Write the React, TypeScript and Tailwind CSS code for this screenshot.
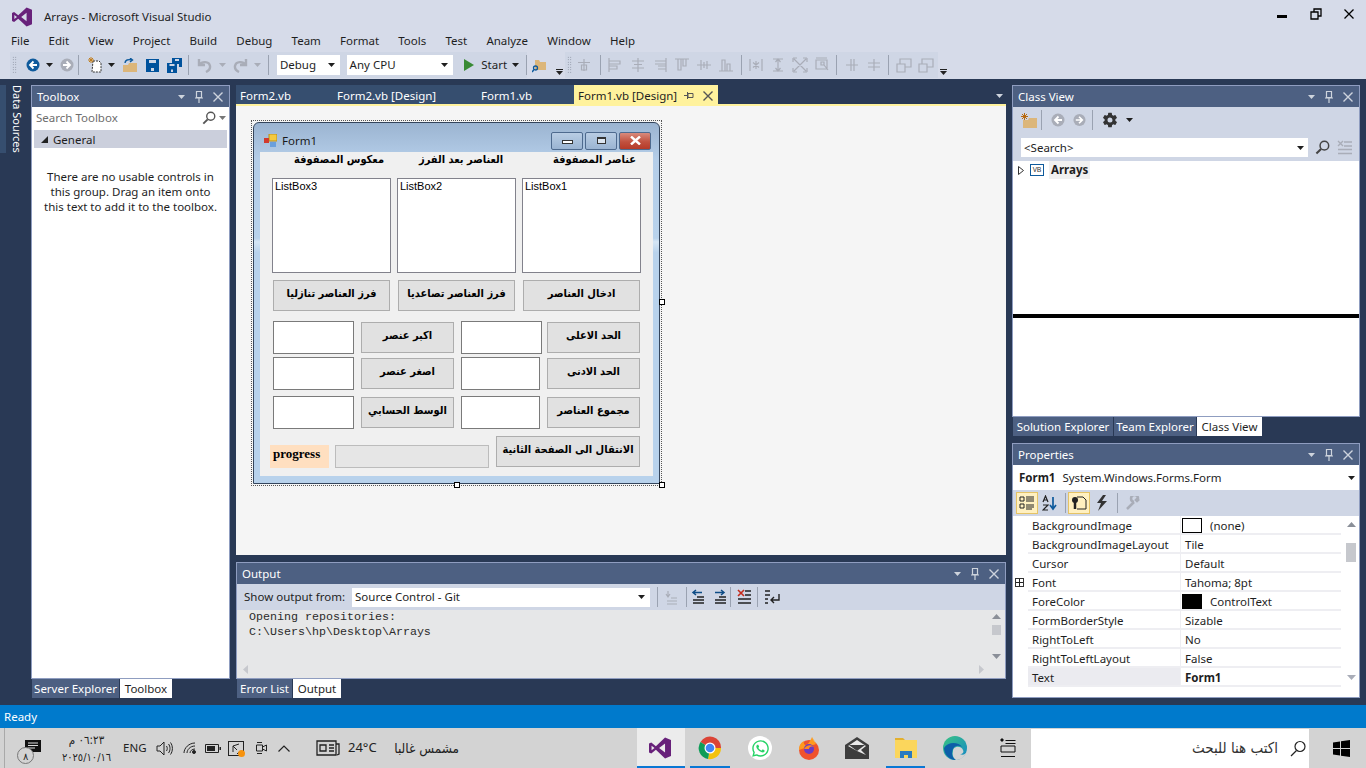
import type { ReactNode } from "react";
import { FaWhatsapp } from "react-icons/fa";
import { IoSettingsSharp } from "react-icons/io5";

const arabic = "font-['DejaVu_Sans_Condensed','DejaVu_Sans',sans-serif]";

function Tri({ className = "fill-[#1e1e1e]" }: { className?: string }) {
  return (
    <svg width="7" height="4" viewBox="0 0 7 4" className={className}>
      <path d="M0 0h7L3.500 4z" />
    </svg>
  );
}

function Cell({ w, children }: { w: string; children?: ReactNode }) {
  return <div className={`flex h-full shrink-0 items-center justify-center ${w}`}>{children}</div>;
}

function Sep({ className = "" }: { className?: string }) {
  return <div className={`h-[20px] w-px shrink-0 bg-[#9aa2b1] ${className}`} />;
}

function Circle({ dir, color }: { dir: "l" | "r"; color: string }) {
  return (
    <svg width="14" height="14" viewBox="0 0 14 14">
      <circle cx="7" cy="7" r="6.500" fill={color} />
      <path d={dir === "l" ? "M7.500 3.500 4 7l3.500 3.500M4.500 7H11" : "M6.500 3.500 10 7l-3.500 3.500M9.500 7H3"} stroke="#fff" strokeWidth="1.800" fill="none" />
    </svg>
  );
}

function Glyph({ d, color = "#a9adb8" }: { d: string; color?: string }) {
  return (
    <svg width="16" height="16" viewBox="0 0 16 16">
      <path d={d} stroke={color} strokeWidth="1.200" fill="none" />
    </svg>
  );
}

function Magnifier({ color = "#555", size = 15 }: { color?: string; size?: number }) {
  return (
    <svg width={size} height={size} viewBox="0 0 16 16">
      <circle cx="10" cy="6" r="4.600" stroke={color} strokeWidth="1.600" fill="none" />
      <path d="M6.500 9.500 1.500 14.500" stroke={color} strokeWidth="2.200" />
    </svg>
  );
}

function FolderIcon() {
  return (
    <svg width="16" height="15" viewBox="0 0 16 15">
      <path d="M2 7h5l1-2h8v10H2z" fill="#dcb67a" />
      <path d="M3.500 0v7M0 3.500h7M1 1l5 5M6 1 1 6" stroke="#b8690f" strokeWidth="1" />
    </svg>
  );
}

function PaneTitle({ title }: { title: string }) {
  return (
    <div className="flex h-[21px] shrink-0 items-center bg-[#4d6082] pl-[5px] text-[11.5px] text-white">
      <span className="flex-1">{title}</span>
      <Tri className="fill-[#ced4dd]" />
      <svg width="10" height="14" viewBox="0 0 10 14" className="ml-[9px]" fill="none" stroke="#ced4dd" strokeWidth="1.200">
        <path d="M2.500 1.500h5v6h-5zM1 8h8M5 8v5" />
      </svg>
      <svg width="10" height="10" viewBox="0 0 10 10" className="mr-[6px] ml-[9px]" stroke="#ced4dd" strokeWidth="1.400">
        <path d="M.5.500l9 9M9.500.500l-9 9" />
      </svg>
    </div>
  );
}

function BottomTab({ label, active, w }: { label: string; active?: boolean; w: string }) {
  return (
    <div className={`flex h-[19px] items-center justify-center text-[11.5px] ${w} ${active ? "bg-white text-[#1e1e1e]" : "bg-[#4d6082] text-white"}`}>
      {label}
    </div>
  );
}

function Overflow({ className = "" }: { className?: string }) {
  return (
    <div className={`flex h-full items-end justify-center pb-[3px] ${className}`}>
      <div className="flex flex-col items-center gap-[1px]">
        <div className="h-px w-[7px] bg-[#222]" />
        <Tri className="fill-[#222]" />
      </div>
    </div>
  );
}

function Grip() {
  return (
    <Cell w="w-[8px]">
      <div className="h-[18px] w-[5px] bg-[radial-gradient(#7d8594_0.6px,transparent_0.8px)] bg-[length:2.5px_2.5px]" />
    </Cell>
  );
}

function MainToolbars() {
  const dis = "#a9adb8";
  return (
    <div className="flex h-[26px] items-center pl-[10px] text-[11.5px] text-[#1e1e1e]">
      <div className="flex h-full w-[543px] items-center bg-[#cfd6e5]">
        <Grip />
        <div className="w-[5px]" />
        <Cell w="w-[20px]"><Circle dir="l" color="#0e5a9c" /></Cell>
        <Cell w="w-[13px]"><Tri /></Cell>
        <Cell w="w-[22px]"><Circle dir="r" color="#a9adb8" /></Cell>
        <Sep className="mr-[6px]" />
        <Cell w="w-[20px]">
          <svg width="16" height="16" viewBox="0 0 16 16">
            <path d="M6 4h6l2 2v9H5z" fill="#fff" stroke="#333" strokeDasharray="2 1" />
            <path d="M4 0v6M1 3h6M2 1l4 4M6 1 2 5" stroke="#c27d1a" />
          </svg>
        </Cell>
        <Cell w="w-[14px]"><Tri /></Cell>
        <Cell w="w-[22px]">
          <svg width="16" height="15" viewBox="0 0 16 15">
            <path d="M1 7h5l1-2h8v9H1z" fill="#dcb67a" />
            <path d="M3 5c0-3 3-4 7-3M8 0l2.500 2L8 4" stroke="#0e5a9c" strokeWidth="1.400" fill="none" />
          </svg>
        </Cell>
        <Cell w="w-[23px]">
          <svg width="13" height="13" viewBox="0 0 13 13">
            <path d="M0 0h13v13H0z" fill="#00529c" />
            <path d="M3 1h7v3H3zM5 9h3v3H5z" fill="#cfd6e5" />
          </svg>
        </Cell>
        <Cell w="w-[21px]">
          <svg width="15" height="15" viewBox="0 0 15 15">
            <path d="M5 0h10v9h-3v-3H5z" fill="#00529c" />
            <path d="M0 5h10v10H0z" fill="#00529c" />
            <path d="M2.500 6h5v2h-5zM4 11.500h2V14H4zM8 1h4v2H8z" fill="#cfd6e5" />
          </svg>
        </Cell>
        <Sep className="mr-[7px] ml-[3px]" />
        <Cell w="w-[18px]">
          <svg width="16" height="15" viewBox="0 0 16 15" fill="none" stroke={dis} strokeWidth="2.400">
            <path d="M2 1v6h6M2 7c3-4 10-4 11 1 .5 3-2 5-4 6" />
          </svg>
        </Cell>
        <Cell w="w-[17px]"><Tri className="fill-[#a9adb8]" /></Cell>
        <Cell w="w-[18px]">
          <svg width="16" height="15" viewBox="0 0 16 15" fill="none" stroke={dis} strokeWidth="2.400">
            <path d="M14 1v6H8M14 7C11 3 4 3 3 8c-.5 3 2 5 4 6" />
          </svg>
        </Cell>
        <Cell w="w-[17px]"><Tri className="fill-[#a9adb8]" /></Cell>
        <Sep className="mr-[8px] ml-[2px]" />
        <div className="flex h-[20px] w-[64px] items-center justify-between bg-white pr-[5px] pl-[3px]">
          Debug <Tri />
        </div>
        <div className="ml-[7px] flex h-[20px] w-[109px] items-center justify-between bg-white pr-[5px] pl-[3px]">
          Any CPU <Tri />
        </div>
        <Cell w="ml-[8px] w-[16px]">
          <svg width="10" height="12" viewBox="0 0 10 12"><path d="M0 0l10 6-10 6z" fill="#388a34" /></svg>
        </Cell>
        <span className="ml-[4px] w-[28px]">Start</span>
        <Cell w="w-[14px]"><Tri /></Cell>
        <Sep className="ml-[3px]" />
        <div className="flex h-full w-[27px] items-center justify-center bg-[#d6dbe9]">
          <svg width="15" height="15" viewBox="0 0 15 15">
            <path d="M3 2h4l1 2h6v8H3z" fill="#dcb67a" />
            <circle cx="3.500" cy="10" r="2" fill="none" stroke="#0e5a9c" strokeWidth="1.300" />
            <path d="M2 11.500 0 14" stroke="#0e5a9c" strokeWidth="1.500" />
          </svg>
        </div>
      </div>
      <Overflow className="w-[12px]" />
      <div className="flex h-full w-[373px] items-center bg-[#cfd6e5]">
        <Grip />
        <Cell w="w-[22px]"><Glyph d="M2 5.500h12M8 2v12M5.500 8h5v5h-5z" /></Cell>
        <Sep className="mr-[3px] ml-[5px]" />
        <Cell w="w-[22px]"><Glyph d="M2 1v14M2 4h11v3H2M2 9h8v3H2" /></Cell>
        <Cell w="w-[23px]"><Glyph d="M8 1v14M2 4h12M4 7.500h8M2 11h12" /></Cell>
        <Cell w="w-[22px]"><Glyph d="M14 1v14M3 4h11v3H3M6 9h8v3H6" /></Cell>
        <Cell w="w-[22px]"><Glyph d="M1 2h14M4 2h3v11H4zM9 2h3v7H9z" /></Cell>
        <Cell w="w-[22px]"><Glyph d="M1 8h14M5 3v10M11 4v8M8 5v6" /></Cell>
        <Cell w="w-[22px]"><Glyph d="M1 14h14M4 3h3v11H4zM9 7h3v7H9z" /></Cell>
        <Sep className="mr-[2px] ml-[4px]" />
        <Cell w="w-[23px]"><Glyph d="M2 2v12M14 2v12M8 4v8M5 5.500l6 5M11 5.500l-6 5" /></Cell>
        <Cell w="w-[22px]"><Glyph d="M3 2h10M3 14h10M8 2v12M5.500 5 8 2l2.500 3M5.500 11 8 14l2.500-3" /></Cell>
        <Cell w="w-[22px]"><Glyph d="M1 1h4M1 1v4M15 1h-4M15 1v4M1 15h4M1 15v-4M15 15h-4M15 15v-4M2 2l12 12M14 2 2 14" /></Cell>
        <Cell w="w-[22px]"><Glyph d="M2 3h11v9H2zM2 1h11M7 5h3v3H7zM10 8l4 5" /></Cell>
        <Sep className="mr-[4px] ml-[3px]" />
        <Cell w="w-[22px]"><Glyph d="M7 2v12M10 2v12M2 8h12" /></Cell>
        <Cell w="w-[22px]"><Glyph d="M2 6h12M2 10h12M8 2v12" /></Cell>
        <Sep className="mr-[4px] ml-[3px]" />
        <Cell w="w-[22px]"><Glyph d="M1 7h8v8H1zM4 7V2h11v8h-6" /></Cell>
        <Cell w="w-[22px]"><Glyph d="M1 7h8v8H1zM4 7V2h11v8h-6" /></Cell>
      </div>
      <Overflow className="w-[10px] bg-[#d6dbe9]" />
    </div>
  );
}

function Toolbox() {
  return (
    <div className="flex w-[199px] flex-col">
      <div className="flex flex-1 flex-col border border-[#8f9dc0] bg-white">
        <PaneTitle title="Toolbox" />
        <div className="flex h-[20px] items-center justify-between bg-white pt-px pr-[3px] pl-[4px] text-[11.5px] text-[#6d6d6d]">
          <span>Search Toolbox</span>
          <span className="flex items-center gap-[3px]"><Magnifier color="#555" size={14} /><Tri className="fill-[#777]" /></span>
        </div>
        <div className="mx-[2px] mt-[3px] flex h-[18px] items-center bg-[#cbcfdc] pt-px pl-[6px] text-[11.5px] text-[#1e1e1e]">
          <svg width="7" height="7" viewBox="0 0 7 7" className="mr-[5px] ml-[1px]"><path d="M7 0v7H0z" fill="#222" /></svg>
          General
        </div>
        <p className="mt-[21px] px-[10px] text-center text-[11.5px] leading-[15px] text-[#1e1e1e]">
          There are no usable controls in this group. Drag an item onto this text to add it to the toolbox.
        </p>
      </div>
      <div className="flex gap-px pl-px">
        <BottomTab label="Server Explorer" w="w-[87px]" />
        <BottomTab label="Toolbox" active w="w-[52px]" />
      </div>
    </div>
  );
}

function FormBtn({ label, w }: { label: string; w: string }) {
  return (
    <div className={`flex h-[31px] shrink-0 items-center justify-center border border-[#adadad] bg-[#e1e1e1] pb-[2px] text-[11px] font-bold whitespace-nowrap text-black ${arabic} ${w}`} dir="rtl">
      {label}
    </div>
  );
}

function TextBox({ w }: { w: string }) {
  return <div className={`h-[33px] shrink-0 border border-[#7a7a7a] bg-white ${w}`} />;
}

function ListBox({ name }: { name: string }) {
  return (
    <div className="h-[95px] w-[119px] border border-[#82828c] bg-white pl-[2px] font-['Liberation_Sans',sans-serif] text-[11px] leading-[15px] text-black">
      {name}
    </div>
  );
}

function Handle() {
  return <div className="h-[6px] w-[6px] border border-black bg-white" />;
}

function CaptionBtn({ children, className }: { children: ReactNode; className: string }) {
  return <div className={`flex h-[18px] w-[32px] items-center justify-center rounded-[2px] border border-[#4e6a8e] ${className}`}>{children}</div>;
}

function DesignedForm() {
  return (
    <div className="relative w-[411px] border border-dotted border-[#555] p-px">
      <div className="flex h-[362px] w-[407px] flex-col rounded-t-[6px] border border-[#34455c] bg-[linear-gradient(#9bb4d1_0,#b4cde8_10%,#b8d2ec_32%,#d6e6f5_33%,#b8d2ec_36%,#b8d2ec_100%)]">
        <div className="flex h-[29px] shrink-0 items-center pt-[6px] pl-[10px] text-[11.5px] text-[#1a1a1a]">
          <svg width="13" height="13" viewBox="0 0 13 13">
            <path d="M5 0h8v7H5z" fill="#f4c93e" stroke="#b98f1c" />
            <path d="M0 4h5v5H0z" fill="#d13a2e" />
            <path d="M6 8h6v5H6z" fill="#6a9fdc" />
          </svg>
          <span className="ml-[5px] flex-1">Form1</span>
          <div className="mr-[8px] flex gap-[2px]">
            <CaptionBtn className="bg-[linear-gradient(#b9cde4,#9ab4d2)]"><div className="mt-[2px] h-[4px] w-[11px] border border-[#333] bg-white" /></CaptionBtn>
            <CaptionBtn className="bg-[linear-gradient(#b9cde4,#9ab4d2)]"><div className="h-[7px] w-[9px] border border-t-2 border-[#333] bg-white/60" /></CaptionBtn>
            <CaptionBtn className="bg-[linear-gradient(#d98a7c,#c1513f_55%,#b53a28)]">
              <svg width="11" height="9" viewBox="0 0 11 9" stroke="#fff" strokeWidth="2.400"><path d="M1 .5l9 8M10 .5l-9 8" /></svg>
            </CaptionBtn>
          </div>
        </div>
        <div className="mx-[6px] flex h-[324px] flex-col bg-[#f0f0f0]">
          <div className={`flex h-[26px] shrink-0 items-start text-[11px] leading-[15px] font-bold whitespace-nowrap text-black ${arabic}`} dir="ltr">
            <span className="ml-[34px] w-[87px] text-center">معكوس المصفوفة</span>
            <span className="ml-[38px] w-[81px] text-center">العناصر بعد الفرز</span>
            <span className="ml-[53px] w-[79px] text-center">عناصر المصفوفة</span>
          </div>
          <div className="ml-[12px] flex gap-[6px]">
            <ListBox name="ListBox3" />
            <ListBox name="ListBox2" />
            <ListBox name="ListBox1" />
          </div>
          <div className="mt-[7px] ml-[13px] flex gap-[8px]">
            <FormBtn label="فرز العناصر تنازليا" w="w-[117px]" />
            <FormBtn label="فرز العناصر تصاعديا" w="w-[117px]" />
            <FormBtn label="ادخال العناصر" w="w-[117px]" />
          </div>
          <div className="mt-[10px] ml-[13px] flex items-center">
            <TextBox w="w-[81px]" />
            <FormBtn label="اكبر عنصر" w="ml-[7px] w-[93px]" />
            <TextBox w="ml-[7px] w-[81px]" />
            <FormBtn label="الحد الاعلى" w="ml-[5px] w-[93px]" />
          </div>
          <div className="mt-[3px] ml-[13px] flex items-center">
            <TextBox w="w-[81px]" />
            <FormBtn label="اصغر عنصر" w="ml-[7px] w-[93px]" />
            <TextBox w="ml-[7px] w-[79px]" />
            <FormBtn label="الحد الادنى" w="ml-[7px] w-[93px]" />
          </div>
          <div className="mt-[6px] ml-[13px] flex items-center">
            <TextBox w="w-[81px]" />
            <FormBtn label="الوسط الحسابي" w="ml-[7px] w-[93px]" />
            <TextBox w="ml-[7px] w-[79px]" />
            <FormBtn label="مجموع العناصر" w="ml-[7px] w-[93px]" />
          </div>
          <div className="mt-[7px] ml-[10px] flex h-[32px]">
            <div className="mt-[9px] h-[23px] w-[59px] bg-[#ffdfc0] pl-[3px] font-['Liberation_Serif',serif] text-[13px] leading-[17px] font-bold text-black">progress</div>
            <div className="mt-[9px] ml-[6px] h-[23px] w-[154px] border border-[#bcbcbc] bg-[#e6e6e6]" />
            <FormBtn label="الانتقال الى الصفحة الثانية" w="ml-[7px] w-[144px]" />
          </div>
        </div>
      </div>
      <div className="absolute top-[178px] left-[407px]"><Handle /></div>
      <div className="absolute top-[361px] left-[202px]"><Handle /></div>
      <div className="absolute top-[361px] left-[407px]"><Handle /></div>
    </div>
  );
}

function ArrowLines({ dir }: { dir: "l" | "r" }) {
  return (
    <svg width="16" height="16" viewBox="0 0 16 16" fill="none">
      <path d={dir === "l" ? "M3 3.500h9M6 1 3 3.500 6 6" : "M3 3.500h9M9 1l3 2.500L9 6"} stroke="#0e4c86" strokeWidth="1.500" />
      <path d="M7 8h7M3 11h11M3 14h11" stroke="#222" strokeWidth="1.300" />
    </svg>
  );
}

function Center() {
  return (
    <div className="flex w-[770px] flex-col">
      <div className="flex h-[19px] items-center text-[11.5px] text-white">
        <div className="flex h-full w-[338px] items-center bg-[#364e6f] pt-[3px] pl-[4px]">
          <span className="w-[97px]">Form2.vb</span>
          <span className="w-[144px]">Form2.vb [Design]</span>
          <span>Form1.vb</span>
        </div>
        <div className="flex h-full w-[144px] items-center bg-[#fff29d] pt-[3px] pl-[4px] text-[#1e1e1e]">
          <span className="flex-1">Form1.vb [Design]</span>
          <svg width="10" height="8" viewBox="0 0 10 8" fill="none" stroke="#555"><path d="M4 1.500h5v4H4zM3.500 0v7M0 3.500h3" /></svg>
          <svg width="10" height="10" viewBox="0 0 10 10" className="mr-[5px] ml-[9px]" stroke="#555" strokeWidth="1.400"><path d="M.5.500l9 9M9.500.500l-9 9" /></svg>
        </div>
        <div className="flex flex-1 justify-end pt-[3px] pr-[3px]"><Tri className="fill-[#ced4dd]" /></div>
      </div>
      <div className="h-[451px] border-t-2 border-[#fff29d] bg-[#f5f5f5] pt-[14px] pl-[15px]">
        <DesignedForm />
      </div>
      <div className="mt-[7px] flex flex-1 flex-col border border-[#8f9dc0]">
        <PaneTitle title="Output" />
        <div className="flex h-[26px] shrink-0 items-center bg-[#cfd6e5] pl-[7px] text-[11.5px] text-[#1e1e1e]">
          <span className="w-[108px]">Show output from:</span>
          <div className="flex h-[19px] w-[298px] items-center justify-between bg-white pr-[5px] pl-[3px]">Source Control - Git <Tri /></div>
          <Sep className="ml-[7px]" />
          <Cell w="w-[28px]"><Glyph d="M4 2v6M2 5l2 3 2-3M7 9h6M3 12h10M3 15h10" /></Cell>
          <Sep />
          <Cell w="w-[22px]"><ArrowLines dir="l" /></Cell>
          <Cell w="w-[21px]"><ArrowLines dir="r" /></Cell>
          <Sep />
          <Cell w="w-[26px]">
            <svg width="16" height="16" viewBox="0 0 16 16">
              <path d="M2 1l6 6M8 1 2 7" stroke="#c42b1c" strokeWidth="1.600" />
              <path d="M9 2h6M9 6h6M2 10h13M2 14h13" stroke="#222" strokeWidth="1.600" />
            </svg>
          </Cell>
          <Sep />
          <Cell w="w-[28px]">
            <svg width="16" height="14" viewBox="0 0 16 14" fill="none" stroke="#222">
              <path d="M1 1h5M1 5h5M1 9h3M1 13h3M15 4v6H7M10 7 7 10l3 3" strokeWidth="1.400" />
            </svg>
          </Cell>
        </div>
        <div className="relative flex-1 bg-[#e6e7e8] pl-[12px] font-['Liberation_Mono',monospace] text-[11.67px] leading-[15px] text-[#2b2b2b]">
          <div>Opening repositories:</div>
          <div>C:\Users\hp\Desktop\Arrays</div>
          <div className="absolute top-[4px] right-[4px] flex h-[45px] w-[9px] flex-col items-center justify-between">
            <svg width="9" height="5" viewBox="0 0 9 5"><path d="M4.500 0 9 5H0z" fill="#8a8f98" /></svg>
            <div className="h-[10px] w-[9px] bg-[#c6c8cd]" />
            <div className="h-[8px]" />
            <svg width="9" height="5" viewBox="0 0 9 5"><path d="M4.500 5 9 0H0z" fill="#8a8f98" /></svg>
          </div>
          <div className="absolute right-[21px] bottom-[4px] left-[6px] flex justify-between">
            <svg width="5" height="9" viewBox="0 0 5 9"><path d="M0 4.500 5 0v9z" fill="#c6c8cd" /></svg>
            <svg width="5" height="9" viewBox="0 0 5 9"><path d="M5 4.500 0 0v9z" fill="#c6c8cd" /></svg>
          </div>
        </div>
      </div>
      <div className="flex gap-px pl-px">
        <BottomTab label="Error List" w="w-[55px]" />
        <BottomTab label="Output" active w="w-[48px]" />
      </div>
    </div>
  );
}

function ClassView() {
  return (
    <div className="flex h-[332px] flex-col border border-[#8f9dc0] bg-white">
      <PaneTitle title="Class View" />
      <div className="flex h-[26px] shrink-0 items-center bg-[#cfd6e5] pl-[6px]">
        <Cell w="w-[20px]"><FolderIcon /></Cell>
        <Sep className="ml-[2px]" />
        <Cell w="w-[31px]"><Circle dir="l" color="#a9adb8" /></Cell>
        <Cell w="w-[13px]"><Circle dir="r" color="#a9adb8" /></Cell>
        <Sep className="ml-[6px]" />
        <Cell w="w-[33px]"><IoSettingsSharp size={16} color="#333" /></Cell>
        <Tri />
      </div>
      <div className="flex h-[28px] shrink-0 items-start bg-[#cfd6e5] pt-[5px] pl-[8px] text-[11.5px] text-[#1e1e1e]">
        <div className="flex h-[19px] w-[287px] items-center justify-between bg-white pr-[4px] pl-[3px]">&lt;Search&gt; <Tri /></div>
        <div className="mt-[2px] ml-[7px]"><Magnifier color="#444" /></div>
        <div className="mt-[2px] ml-[7px]">
          <svg width="16" height="15" viewBox="0 0 16 15" stroke="#a9adb8" strokeWidth="1.400">
            <path d="M1 1l5 5M6 1 1 6M7 2h8M7 6h8M1 9.500h14M1 13.500h14" />
          </svg>
        </div>
      </div>
      <div className="flex h-[18px] shrink-0 items-center pl-[5px] text-[11.5px] font-bold text-[#1e1e1e]">
        <svg width="6" height="9" viewBox="0 0 6 9" fill="none" stroke="#333"><path d="M.5.500l5 4-5 4z" /></svg>
        <div className="ml-[6px] flex h-[12px] w-[14px] items-center justify-center border border-[#0e5a9c] text-[7px] font-normal text-[#333]">VB</div>
        <div className="ml-[5px] bg-[#f0f0f0] px-[2px]">Arrays</div>
      </div>
      <div className="mt-[135px] h-[4px] shrink-0 bg-black" />
    </div>
  );
}

const props: [string, string, "white" | "black" | null][] = [
  ["BackgroundImage", "(none)", "white"],
  ["BackgroundImageLayout", "Tile", null],
  ["Cursor", "Default", null],
  ["Font", "Tahoma; 8pt", null],
  ["ForeColor", "ControlText", "black"],
  ["FormBorderStyle", "Sizable", null],
  ["RightToLeft", "No", null],
  ["RightToLeftLayout", "False", null],
  ["Text", "Form1", null],
];

function Properties() {
  return (
    <div className="flex flex-1 flex-col border border-[#8f9dc0] bg-white text-[11.5px] text-[#1e1e1e]">
      <PaneTitle title="Properties" />
      <div className="flex h-[25px] shrink-0 items-center pr-[4px] pl-[6px]">
        <b className="font-bold">Form1</b>
        <span className="ml-[7px] flex-1">System.Windows.Forms.Form</span>
        <Tri />
      </div>
      <div className="flex h-[26px] shrink-0 items-center bg-[#cfd6e5] pl-[3px]">
        <div className="flex h-[22px] w-[22px] items-center justify-center border border-[#e5c365] bg-[#fff0c0]">
          <svg width="16" height="14" viewBox="0 0 16 14"><path d="M1 1h4v4H1zM1 8h4v4H1zM7 1h8M7 3h8M7 5h8M7 9h8M7 11h8M7 13h6" stroke="#222" fill="none" /></svg>
        </div>
        <Cell w="w-[24px]">
          <svg width="16" height="16" viewBox="0 0 16 16"><path d="M1 7l2.500-6L6 7M2 5h3M1 10h5l-5 5h5" stroke="#222" strokeWidth="1.200" fill="none" /><path d="M11 2v12M8 10l3 4 3-4" stroke="#0e5a9c" strokeWidth="1.700" fill="none" /></svg>
        </Cell>
        <Sep className="mr-[2px] ml-[3px]" />
        <div className="flex h-[22px] w-[22px] items-center justify-center border border-[#e5c365] bg-[#fff0c0]">
          <svg width="16" height="16" viewBox="0 0 16 16"><path d="M6 2h6l3 3v9H6" stroke="#222" fill="none" /><path d="M4 3v11" stroke="#222" strokeWidth="2.500" /><circle cx="4" cy="5" r="3" fill="#222" /></svg>
        </div>
        <Cell w="w-[24px]">
          <svg width="12" height="16" viewBox="0 0 12 16"><path d="M7 0 1 8h4l-3 8 9-10H6l4-6z" fill="#333" /></svg>
        </Cell>
        <Sep className="ml-[3px]" />
        <Cell w="w-[30px]">
          <svg width="14" height="14" viewBox="0 0 14 14"><path d="M1 13l7-7M8 6a3.500 3.500 0 1 1 4-4L10 4l1 1 2-2" stroke="#a9adb8" strokeWidth="2.500" fill="none" /></svg>
        </Cell>
      </div>
      <div className="flex shrink-0">
        <div className="w-[15px] shrink-0 pt-[62px]">
          <div className="ml-[2px] flex h-[9px] w-[9px] items-center justify-center border border-[#333]">
            <svg width="7" height="7" viewBox="0 0 7 7" stroke="#222"><path d="M3.500 0v7M0 3.500h7" /></svg>
          </div>
        </div>
        <div className="w-[313px] shrink-0">
          {props.map(([name, value, swatch]) => (
            <div key={name} className="flex h-[19px] border-b-2 border-[#eeeef2] leading-[19px]">
              <div className={`w-[152px] pl-[4px] ${name === "Text" ? "bg-[#ebebf0]" : ""}`}>{name}</div>
              <div className="flex flex-1 items-center border-l border-[#eeeef2] pt-px pl-[4px]">
                {swatch === "white" && <div className="mr-[8px] -ml-[3px] h-[15px] w-[20px] border border-black bg-white" />}
                {swatch === "black" && <div className="mr-[8px] -ml-[3px] h-[15px] w-[20px] bg-black" />}
                <span className={name === "Text" ? "font-bold" : ""}>{value}</span>
              </div>
            </div>
          ))}
        </div>
        <div className="flex flex-1 flex-col items-center pt-[6px] pl-[2px]">
          <svg width="9" height="5" viewBox="0 0 9 5"><path d="M4.500 0 9 5H0z" fill="#8a8f98" /></svg>
          <div className="mt-[16px] h-[19px] w-[10px] bg-[#c6c8cd]" />
          <div className="flex-1" />
          <svg width="9" height="5" viewBox="0 0 9 5" className="mb-[7px]"><path d="M4.500 5 9 0H0z" fill="#a9adb8" /></svg>
        </div>
      </div>
    </div>
  );
}

function TaskIcon({ w, children, active, bar, className = "" }: { w: string; children: ReactNode; active?: boolean; bar?: string; className?: string }) {
  return (
    <div className={`relative flex h-[40px] shrink-0 items-center justify-center ${w} ${active ? "bg-[#ececec]" : ""} ${className}`}>
      {children}
      {bar && <div className={`absolute bottom-0 h-[2px] ${bar}`} />}
    </div>
  );
}

function Taskbar() {
  return (
    <div className="flex h-[40px] items-center bg-[#d3d3d3] text-[12px] text-[#222]">
      <div className="flex h-[40px] w-[637px] shrink-0 items-center">
        <div className="ml-[4px] h-[40px] w-px bg-[#a9a9a9]" />
        <div className="relative ml-[20px] h-[40px] w-[24px]">
          <svg width="17" height="15" viewBox="0 0 17 15" className="absolute top-[12px] left-0">
            <path d="M0 0h16v12H8l-3 3v-3H0z" fill="#111" />
            <path d="M3 3h10M3 5.500h10M3 8h7" stroke="#ddd" />
          </svg>
          <div className="absolute top-[19px] left-[-8px] flex h-[17px] w-[17px] items-center justify-center rounded-full border border-[#777] bg-[#d3d3d3] text-[10px] leading-none">٨</div>
        </div>
        <div className={`ml-[13px] flex w-[49px] flex-col items-center pt-px text-[11.5px] leading-[18px] ${arabic}`} dir="rtl">
          <span>٠٦:٢٣ م</span>
          <span className="text-[11px]">٢٠٢٥/١٠/١٦</span>
        </div>
        <span className="ml-[12px] w-[33px] text-[11.5px]">ENG</span>
        <svg width="17" height="15" viewBox="0 0 17 15" className="shrink-0" fill="none" stroke="#222">
          <path d="M1 5h3l4-4v13l-4-4H1zM10.500 5c1 1.500 1 3.500 0 5M12.500 3c2 2.500 2 6.500 0 9M14.500 1.500c2.500 3.500 2.500 8.500 0 12" />
        </svg>
        <svg width="14" height="12" viewBox="0 0 14 12" className="ml-[10px] shrink-0" fill="none" stroke="#222">
          <path d="M1 11C1 6 6 1 12 1M4 11c0-3 3-7 8-7M7 11c0-2 2-4 5-4" />
          <circle cx="11" cy="10" r="1.500" fill="#222" />
        </svg>
        <svg width="16" height="9" viewBox="0 0 16 9" className="ml-[8px] shrink-0">
          <path d="M.5.500h13v8H.5z" fill="none" stroke="#222" />
          <path d="M2 2h8v5H2zM14.500 3H16v3h-1.500z" fill="#222" />
        </svg>
        <div className="relative ml-[7px] h-[15px] w-[16px] shrink-0 border border-[#222]">
          <svg width="14" height="13" viewBox="0 0 14 13" fill="none" stroke="#222"><path d="M4 10V4l6-2M4 4l4 4M8 12l3-3" /></svg>
          <div className="absolute top-[8px] left-[9px] h-[7px] w-[7px] rounded-full bg-[#f7930e]" />
        </div>
        <svg width="12" height="16" viewBox="0 0 12 16" className="ml-[11px] shrink-0" fill="none" stroke="#222">
          <path d="M1.500 5h6v6h-6zM7.500 7l4-2v6l-4-2M2 2.500h5M2 13.500h5" />
        </svg>
        <svg width="12" height="7" viewBox="0 0 12 7" className="ml-[11px] shrink-0" fill="none" stroke="#222" strokeWidth="1.200"><path d="M.5 6.500 6 1l5.500 5.500" /></svg>
        <svg width="24" height="16" viewBox="0 0 24 16" className="ml-[26px] shrink-0" fill="none" stroke="#222" strokeWidth="1.300">
          <path d="M1 1h19v14H1zM20 4h3v10l-2 1M4 5h6v6H4zM13 5h5M13 8h5M13 11h5" />
        </svg>
        <span className="ml-[8px] w-[29px] text-[13px] whitespace-nowrap">24°C</span>
        <span className={`ml-[10px] w-[72px] text-[13.5px] whitespace-nowrap ${arabic}`} dir="rtl">مشمس غالبا</span>
      </div>
      <TaskIcon w="w-[48px]" active bar="right-0 left-0 bg-[#0a78d4]">
        <svg width="22" height="22" viewBox="0 0 24 24" className="mr-[2px]">
          <path fillRule="evenodd" d="M17.500.500 7.500 10l-5-4L0 7.200v9.600L2.500 18l5-4 10 9.500 6.500-2.700V3.200zm0 6.500v10L11 12zM2.800 9.500 6 12l-3.200 2.500z" fill="#68217a" />
        </svg>
      </TaskIcon>
      <TaskIcon w="w-[50px]" bar="right-[5px] left-[5px] bg-[#0a78d4]">
        <svg width="24" height="24" viewBox="0 0 24 24">
          <path d="M12 12 2.500 6A11 11 0 0 1 23 12z" fill="#db4437" />
          <path d="M12 12 23 12A11 11 0 0 1 10 23z" fill="#f4c20d" />
          <path d="M12 12l-2 11A11 11 0 0 1 2.500 6z" fill="#0f9d58" />
          <circle cx="12" cy="12" r="5.500" fill="#fff" />
          <circle cx="12" cy="12" r="4.300" fill="#4285f4" />
        </svg>
      </TaskIcon>
      <TaskIcon w="w-[50px]">
        <div className="flex h-[24px] w-[24px] items-center justify-center rounded-full bg-white">
          <FaWhatsapp size={19} color="#25d366" />
        </div>
      </TaskIcon>
      <TaskIcon w="w-[47px]">
        <svg width="22" height="24" viewBox="0 0 22 24">
          <circle cx="11" cy="14" r="10" fill="#f0522d" />
          <path d="M14 1c1 4 6 6 7 13 0 1 0-4-3-7z" fill="#ffb12a" />
          <path d="M1 14C1 8 4 6 6 5c-1 3 1 4 2 4s4-3 6-8c1 3 3 5 4 7z" fill="#ff9a1f" />
          <circle cx="11" cy="13" r="5" fill="#6b3bc4" />
          <path d="M6 13c2-4 7-5 10-2-3-1-5 0-5 2z" fill="#ff8a1f" />
        </svg>
      </TaskIcon>
      <TaskIcon w="w-[49px]">
        <svg width="24" height="22" viewBox="0 0 24 22">
          <path d="M0 8 12 0l12 8v14H0z" fill="#3d3d3d" />
          <path d="M3 9l9-6 9 6-5 4 5 5-9-4z" fill="#e8e8e8" />
          <path d="M4 8h16L12 14z" fill="#3d3d3d" />
        </svg>
      </TaskIcon>
      <TaskIcon w="w-[49px]" bar="right-[5px] left-[5px] bg-[#0a78d4]">
        <svg width="24" height="24" viewBox="0 0 24 24">
          <path d="M1 2h8l2 2h-10z" fill="#e3b02e" />
          <path d="M1 4h22v18H1z" fill="#fbd65c" />
          <path d="M6 22v-7h12v7h-4v-3h-4v3z" fill="#2a7ac0" />
        </svg>
      </TaskIcon>
      <TaskIcon w="w-[49px]">
        <svg width="24" height="24" viewBox="0 0 24 24">
          <defs>
            <linearGradient id="edgeA" x1="0" y1="0" x2="1" y2="1">
              <stop offset="0" stopColor="#39c481" />
              <stop offset="1" stopColor="#1487c9" />
            </linearGradient>
          </defs>
          <circle cx="12" cy="12" r="12" fill="url(#edgeA)" />
          <path d="M1 12C1 18 6 24 13 24c-4-2-5-7-3-11s6-4 9-2C16 6 5 5 1 12z" fill="#0d5ea8" />
          <path d="M10 15c0-5 8-6 10-1 1 2 0 4-3 4 3 2 6 0 7-3-1 4-5 9-11 9-3-2-4-5-3-9z" fill="#d3d3d3" />
        </svg>
      </TaskIcon>
      <TaskIcon w="w-[52px]" className="pl-[6px]">
        <svg width="16" height="20" viewBox="0 0 16 20" fill="none" stroke="#111">
          <path d="M1 1h2v2H1z" fill="#111" />
          <path d="M5.500 2.500h10M1 8h14v6H1zM1 18.500h14M5.500 5.500h10" />
        </svg>
      </TaskIcon>
      <div className={`flex h-[39px] w-[278px] shrink-0 items-center justify-end bg-white pr-[3px] text-[#333] ${arabic}`}>
        <span dir="rtl" className="mr-[12px] text-[15px] whitespace-nowrap">اكتب هنا للبحث</span>
        <svg width="16" height="17" viewBox="0 0 16 17" fill="none" stroke="#222" strokeWidth="1.200">
          <circle cx="10" cy="6.500" r="5" />
          <path d="M6.500 10.500 1 16" />
        </svg>
      </div>
      <div className="flex flex-1 items-center justify-center pl-[8px]">
        <svg width="17" height="17" viewBox="0 0 17 17" fill="#000">
          <path d="M0 2.500 7 1.500v6.500H0zM8 1.300 17 0v8H8zM0 9h7v6.500l-7-1zM8 9h9v8l-9-1.300z" />
        </svg>
      </div>
    </div>
  );
}

export default function App() {
  const menus = ["File", "Edit", "View", "Project", "Build", "Debug", "Team", "Format", "Tools", "Test", "Analyze", "Window", "Help"];
  return (
    <div className="flex h-[768px] w-[1366px] flex-col overflow-hidden bg-[#293955] font-['Noto_Sans',sans-serif]">
      <div className="h-[79px] shrink-0 bg-[#d6dbe9]">
        <div className="flex h-[32px] items-center pl-[12px] text-[11.5px] text-[#1e1e1e]">
          <svg width="20" height="20" viewBox="0 0 24 24" className="mt-[2px]">
            <path fillRule="evenodd" d="M17.500.500 7.500 10l-5-4L0 7.200v9.600L2.500 18l5-4 10 9.500 6.500-2.700V3.200zm0 6.500v10L11 12zM2.800 9.500 6 12l-3.200 2.500z" fill="#68217a" />
          </svg>
          <span className="mt-[2px] ml-[12px] flex-1">Arrays - Microsoft Visual Studio</span>
          <div className="mb-[4px] flex w-[89px] items-center">
            <div className="mt-[4px] h-[3px] w-[10px] bg-black" />
            <svg width="12" height="12" viewBox="0 0 12 12" className="ml-[23px]" fill="none" stroke="#000" strokeWidth="1.300">
              <path d="M1 4h7v7H1zM4 4V1h7v7H8" />
            </svg>
            <svg width="10" height="10" viewBox="0 0 10 10" className="ml-[22px]" stroke="#000" strokeWidth="1.300"><path d="M.5.500l9 9M9.500.500l-9 9" /></svg>
          </div>
        </div>
        <div className="flex h-[20px] items-center gap-[19.2px] pb-[2px] pl-[11px] text-[11.5px] text-[#1e1e1e]">
          {menus.map((m) => (
            <span key={m}>{m}</span>
          ))}
        </div>
        <MainToolbars />
      </div>
      <div className="flex h-[626px] shrink-0 pt-[6px]">
        <div className="relative w-[31px] shrink-0">
          <div className="h-[68px] w-[6px] bg-[#364e6f]" />
          <span className="absolute top-0 left-[10px] text-[11px] leading-[14px] text-white [writing-mode:vertical-rl]">Data Sources</span>
        </div>
        <div className="flex h-[613px] shrink-0 gap-[6px]">
          <Toolbox />
          <Center />
          <div className="flex w-[348px] flex-col">
            <ClassView />
            <div className="flex gap-px pl-px">
              <BottomTab label="Solution Explorer" w="w-[100px]" />
              <BottomTab label="Team Explorer" w="w-[82px]" />
              <BottomTab label="Class View" active w="w-[65px]" />
            </div>
            <div className="mt-[7px] flex flex-1 flex-col">
              <Properties />
            </div>
          </div>
        </div>
      </div>
      <div className="flex h-[23px] shrink-0 items-center bg-[#007acc] pl-[4px] text-[11.5px] text-white">Ready</div>
      <Taskbar />
    </div>
  );
}
